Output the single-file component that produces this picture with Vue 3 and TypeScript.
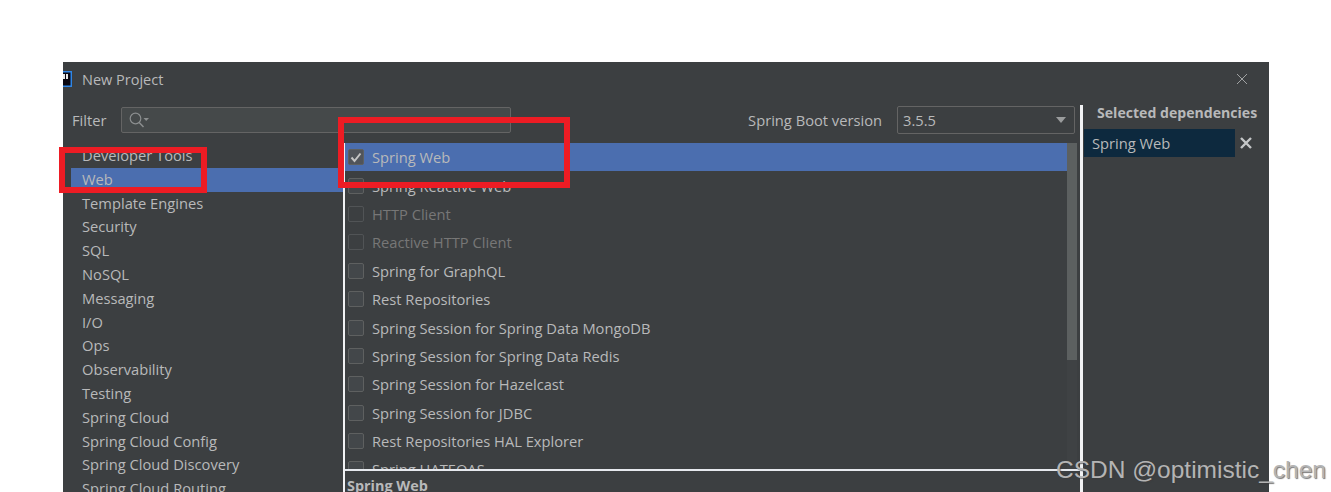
<template>
  <div class="page">
    <div class="dialog">
      <div class="titlebar">
        <svg class="logo" width="9" height="16" viewBox="0 0 9 16">
          <rect x="-7" y="0" width="16" height="16" fill="#2f86e6" />
          <rect x="-6" y="1.5" width="13.5" height="13" fill="#0a0710" />
          <rect x="-6" y="1.5" width="6" height="5" fill="#5a1050" />
          <rect x="0" y="3" width="2" height="5" fill="#e8e8e8" />
          <rect x="3" y="3" width="2" height="5" fill="#e8e8e8" />
        </svg>
        <span class="title">New Project</span>
        <svg class="close" width="12" height="12" viewBox="0 0 12 12">
          <path d="M1 1 L11 11 M11 1 L1 11" stroke="#a0a2a3" stroke-width="1" fill="none" />
        </svg>
      </div>

      <div class="content">
        <div class="main">
          <div class="filter-row">
            <label class="filter-label">Filter</label>
            <div class="filter-box">
              <svg width="24" height="18" viewBox="0 0 24 18">
                <circle cx="6.5" cy="7.5" r="5.3" stroke="#8b8e8f" stroke-width="1.2" fill="none" />
                <path d="M10.2 11.5 L14.5 16" stroke="#8b8e8f" stroke-width="1.5" />
                <path d="M14.5 7 L20 7 L17.2 10 Z" fill="#8b8e8f" />
              </svg>
            </div>
            <span class="boot-label">Spring Boot version</span>
            <div class="version-select">
              <span>3.5.5</span>
              <svg width="10" height="6" viewBox="0 0 10 6"><path d="M0 0 L10 0 L5 6 Z" fill="#9a9c9d" /></svg>
            </div>
          </div>

          <div class="lists">
            <ul class="categories">
              <li v-for="cat in categories" :key="cat" :class="{ selected: cat === 'Web' }">{{ cat }}</li>
            </ul>
            <div class="deps-col">
              <div class="deps-wrap">
                <ul class="deps">
                  <li
                    v-for="dep in dependencies"
                    :key="dep.name"
                    :class="{ selected: dep.checked, disabled: dep.disabled }"
                  >
                    <span class="checkbox" :class="{ checked: dep.checked }">
                      <svg v-if="dep.checked" width="12" height="11" viewBox="0 0 12 11">
                        <path d="M1.5 5.5 L4.5 9 L10.5 1.5" stroke="#c4c4c4" stroke-width="2" fill="none" />
                      </svg>
                    </span>
                    {{ dep.name }}
                  </li>
                </ul>
                <div class="scrollbar"><div class="thumb"></div></div>
              </div>
              <div class="detail">Spring Web</div>
            </div>
          </div>
        </div>

        <aside class="selected-panel">
          <h4>Selected dependencies</h4>
          <div class="chip-row">
            <div class="chip">Spring Web</div>
            <svg width="12" height="12" viewBox="0 0 12 12">
              <path d="M1 1 L11 11 M11 1 L1 11" stroke="#c4c6c7" stroke-width="2.4" fill="none" />
            </svg>
          </div>
        </aside>
      </div>
    </div>

    <!-- annotations drawn over the screenshot -->
    <div class="mark mark-left"></div>
    <div class="mark mark-mid"></div>
    <div class="watermark">CSDN @optimistic_chen</div>
  </div>
</template>

<script setup lang="ts">
interface Dep {
  name: string
  checked?: boolean
  disabled?: boolean
}

const categories: string[] = [
  'Developer Tools',
  'Web',
  'Template Engines',
  'Security',
  'SQL',
  'NoSQL',
  'Messaging',
  'I/O',
  'Ops',
  'Observability',
  'Testing',
  'Spring Cloud',
  'Spring Cloud Config',
  'Spring Cloud Discovery',
  'Spring Cloud Routing',
]

const dependencies: Dep[] = [
  { name: 'Spring Web', checked: true },
  { name: 'Spring Reactive Web' },
  { name: 'HTTP Client', disabled: true },
  { name: 'Reactive HTTP Client', disabled: true },
  { name: 'Spring for GraphQL' },
  { name: 'Rest Repositories' },
  { name: 'Spring Session for Spring Data MongoDB' },
  { name: 'Spring Session for Spring Data Redis' },
  { name: 'Spring Session for Hazelcast' },
  { name: 'Spring Session for JDBC' },
  { name: 'Rest Repositories HAL Explorer' },
  { name: 'Spring HATEOAS' },
]
</script>

<style>
html,
body {
  margin: 0;
  background: #fff;
  overflow: hidden;
}
</style>

<style scoped>
.page {
  position: relative;
  height: 492px;
  overflow: hidden;
  padding: 62px 62px 0 63px;
  box-sizing: border-box;
  font-family: 'Open Sans', 'Noto Sans', sans-serif;
  font-size: 14.7px;
  color: #b8b9ba;
}
.dialog {
  width: 1206px;
  height: 430px;
  background: #3c3f41;
  overflow: hidden;
  display: flex;
  flex-direction: column;
}
.titlebar {
  height: 34px;
  flex: none;
  display: flex;
  align-items: center;
  padding-right: 21px;
}
.title {
  margin-left: 10px;
  font-size: 14.5px;
  flex: 1;
}
.content {
  flex: 1;
  display: flex;
  min-height: 0;
}
.main {
  width: 1017px;
  flex: none;
  display: flex;
  flex-direction: column;
}
.filter-row {
  height: 26px;
  margin-top: 11px;
  margin-bottom: 10px;
  display: flex;
  align-items: center;
  padding-left: 9px;
  flex: none;
}
.filter-label {
  width: 49px;
}
.filter-box {
  width: 390px;
  height: 26px;
  box-sizing: border-box;
  background: #45494a;
  border: 1px solid #646464;
  border-radius: 2px;
  display: flex;
  align-items: center;
  padding-left: 7px;
}
.boot-label {
  margin-left: auto;
  margin-right: 15px;
}
.version-select {
  width: 178px;
  height: 28px;
  margin-right: 5px;
  box-sizing: border-box;
  border: 1px solid #646464;
  border-radius: 2px;
  display: flex;
  align-items: center;
  justify-content: space-between;
  padding: 0 8px 0 5px;
}
.lists {
  flex: 1;
  display: flex;
  min-height: 0;
}
ul {
  list-style: none;
  margin: 0;
  padding: 0;
}
.categories {
  width: 280px;
  padding: 1px 0 0 8px;
  box-sizing: border-box;
  flex: none;
}
.categories li {
  height: 23.8px;
  line-height: 23.8px;
  padding-left: 11px;
  white-space: nowrap;
}
.categories li.selected {
  background: #4b6eaf;
}
.deps-col {
  flex: 1;
  border-left: 2px solid #f1f2f4;
  display: flex;
  flex-direction: column;
  min-width: 0;
}
.deps-wrap {
  height: 326px;
  flex: none;
  display: flex;
  overflow: hidden;
  border-bottom: 2px solid #e6e9ee;
}
.deps {
  width: 722px;
  flex: none;
}
.deps li {
  height: 28.4px;
  display: flex;
  align-items: center;
  padding-left: 3px;
  box-sizing: border-box;
}
.deps li.selected {
  background: #4b6eaf;
}
.deps li.disabled {
  color: #777777;
}
.checkbox {
  width: 16px;
  height: 16px;
  box-sizing: border-box;
  border: 1px solid #5e6060;
  border-radius: 2px;
  background: #43474a;
  margin-right: 8px;
  display: flex;
  align-items: center;
  justify-content: center;
  flex: none;
}
.disabled .checkbox {
  background: transparent;
  border-color: #515456;
}
.checkbox.checked {
  background: #50545a;
}
.scrollbar {
  width: 10px;
  flex: none;
  background: #3f4244;
}
.thumb {
  height: 217px;
  background: #5c6060;
}
.detail {
  font-weight: 700;
  padding: 5px 0 0 2px;
  font-size: 14.4px;
}
.selected-panel {
  flex: 1;
  margin-top: 9px;
  border-left: 3px solid #f1f2f4;
  min-width: 0;
}
.selected-panel h4 {
  margin: 0;
  font-size: 14.1px;
  font-weight: 700;
  line-height: 16px;
  padding: 0 0 0 14px;
  white-space: nowrap;
}
.chip-row {
  display: flex;
  align-items: center;
  gap: 5px;
  margin-top: 8px;
  margin-left: 1px;
}
.chip {
  width: 151px;
  height: 28px;
  line-height: 28px;
  background: #0d293e;
  padding-left: 8px;
  box-sizing: border-box;
}
.mark {
  position: absolute;
  box-sizing: border-box;
  border: 6px solid #ed1c24;
}
.mark-left {
  left: 59px;
  top: 147px;
  width: 148px;
  height: 46px;
}
.mark-mid {
  left: 338px;
  top: 117px;
  width: 232px;
  height: 71px;
}
.watermark {
  position: absolute;
  left: 1056px;
  top: 456px;
  font-family: 'Liberation Sans', sans-serif;
  font-size: 24.5px;
  line-height: 28px;
  color: #b4b4b4;
  text-shadow: 1px 1px 1px rgba(60, 60, 60, 0.7);
  white-space: nowrap;
}
</style>
